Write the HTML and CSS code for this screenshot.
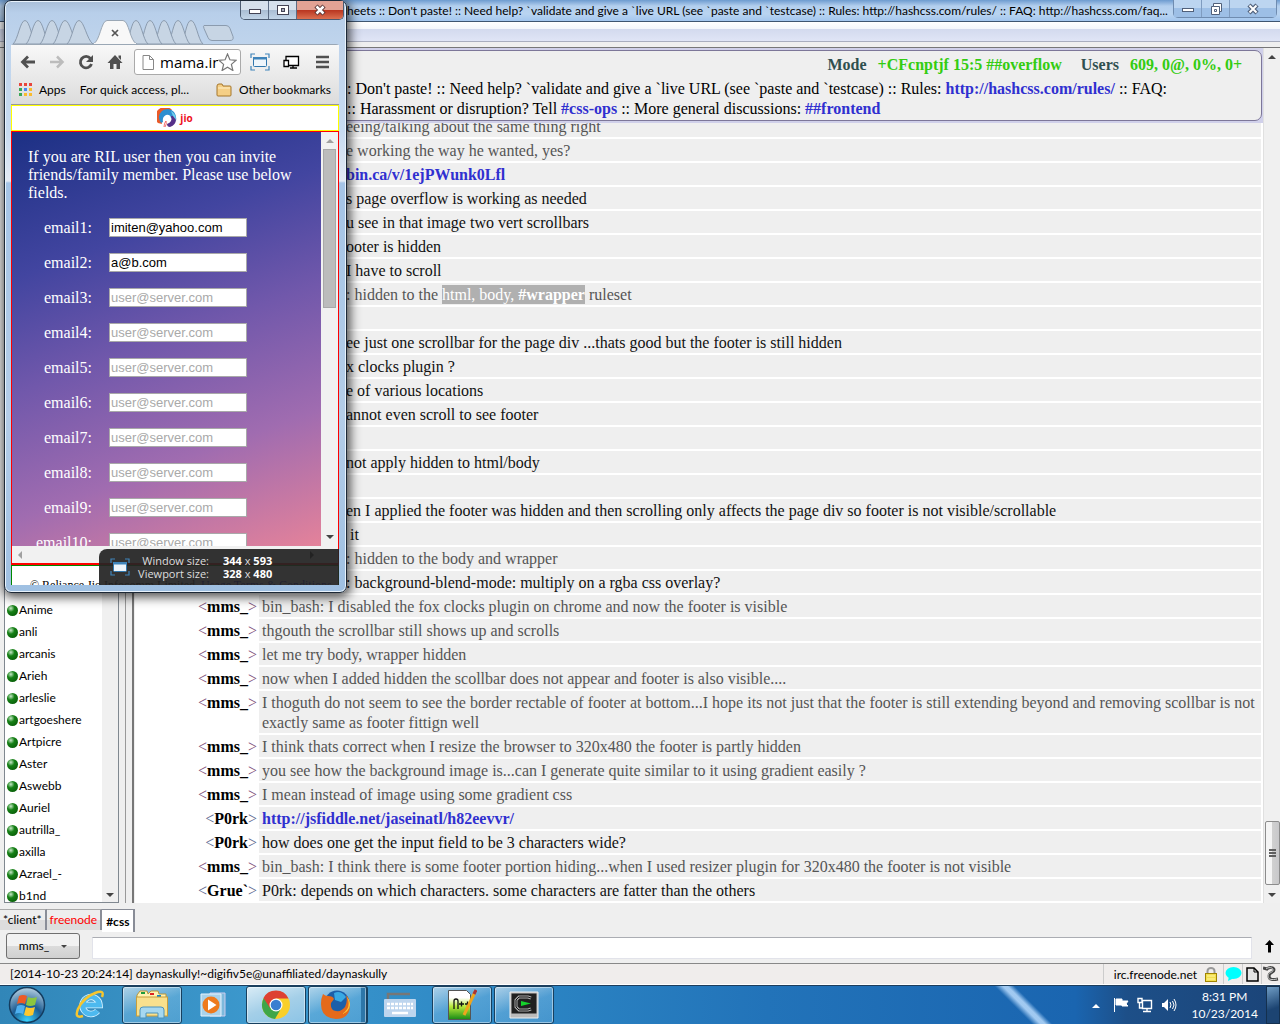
FILE: index.html
```html
<!DOCTYPE html>
<html lang="en">
<head>
<meta charset="utf-8">
<title>#css on freenode</title>
<link rel="stylesheet" href="styles.css">
</head>
<body>
<svg class="defs" width="0" height="0" aria-hidden="true">
  <defs>
    <symbol id="resize" viewBox="0 0 20 18"><path d="M1 5V1h4M15 1h4v4M19 13v4h-4M5 17H1v-4" fill="none" stroke="#3f84ba" stroke-width="1.2"/><rect x="3.500" y="4.500" width="13" height="9" rx="1" fill="#eef5fb" stroke="#2f76ad"/><path d="M3 4h14v2.500H3z" fill="#3f84ba"/></symbol>
  </defs>
</svg>

<main class="irc">
  <header class="titlebar">
    <h1 class="titlebar-text">heets :: Don't paste! :: Need help? `validate and give a `live URL (see `paste and `testcase) :: Rules: http://hashcss.com/rules/ :: FAQ: http://hashcss.com/faq...</h1>
    <div class="win-buttons">
      <button class="win-btn" aria-label="Minimize"><svg width="14" height="14"><rect x="1.500" y="6.500" width="11" height="3" fill="#fff" stroke="#50607a"/></svg></button>
      <button class="win-btn" aria-label="Restore"><svg width="14" height="14"><path d="M4.500 1.500h8v8h-2v3h-8v-8h2z" fill="#fff" stroke="#50607a"/><path d="M4.500 4.500h6v6M5.500 7.500h2v2h-2z" fill="none" stroke="#50607a"/></svg></button>
      <button class="win-btn win-btn-wide" aria-label="Close"><svg width="14" height="14"><path d="M3 3l8 8M11 3l-8 8" stroke="#50607a" stroke-width="4.500"/><path d="M3.500 3.500l7 7M10.500 3.500l-7 7" stroke="#fff" stroke-width="2"/></svg></button>
    </div>
  </header>
  <div class="menubar"></div>

  <div class="workspace">
    <aside class="users">
      <div class="user-box">
        <ul class="user-list">
          <li>Anime</li><li>anli</li><li>arcanis</li><li>Arieh</li><li>arleslie</li><li>artgoeshere</li><li>Artpicre</li><li>Aster</li><li>Aswebb</li><li>Auriel</li><li>autrilla_</li><li>axilla</li><li>Azrael_-</li><li>b1nd</li>
        </ul>
        <div class="list-scroll"><i class="arrow-down"></i></div>
      </div>
    </aside>
    <section class="channel">
      <div class="log-area">
        <div class="topic-wrap">
          <div class="topic">
            <p class="modes"><b>Mode</b><b class="val">+CFcnptjf 15:5 ##overflow</b><b class="users-label">Users</b><b class="val">609, 0@, 0%, 0+</b></p>
            <p class="topic-line">: Don't paste! :: Need help? `validate and give a `live URL (see `paste and `testcase) :: Rules: <a href="#rules">http://hashcss.com/rules/</a> :: FAQ:</p>
            <p class="topic-line">:: Harassment or disruption? Tell <a href="#ops">#css-ops</a> :: More general discussions: <a href="#frontend">##frontend</a></p>
          </div>
        </div>
        <ol class="log">
          <li class="covered own"><p>eeing/talking about the same thing right</p></li>
          <li class="covered own"><p>e working the way he wanted, yes?</p></li>
          <li class="covered"><p><a href="#paste">bin.ca/v/1ejPWunk0Lfl</a></p></li>
          <li class="covered"><p>s page overflow is working as needed</p></li>
          <li class="covered"><p>u see in that image two vert scrollbars</p></li>
          <li class="covered"><p>ooter is hidden</p></li>
          <li class="covered"><p>I have to scroll</p></li>
          <li class="covered own"><p>: hidden to the <mark>html, body, <b>#wrapper</b></mark> ruleset</p></li>
          <li class="covered"><p></p></li>
          <li class="covered"><p>ee just one scrollbar for the page div ...thats good but the footer is still hidden</p></li>
          <li class="covered"><p>x clocks plugin ?</p></li>
          <li class="covered"><p>e of various locations</p></li>
          <li class="covered"><p>annot even scroll to see footer</p></li>
          <li class="covered"><p></p></li>
          <li class="covered"><p>not apply hidden to html/body</p></li>
          <li class="covered"><p></p></li>
          <li class="covered"><p>en I applied the footer was hidden and then scrolling only affects the page div so footer is not visible/scrollable</p></li>
          <li class="covered"><p>&nbsp;it</p></li>
          <li class="covered own"><p>: hidden to the body and wrapper</p></li>
          <li class="covered"><p>: background-blend-mode: multiply on a rgba css overlay?</p></li>
          <li class="own"><span class="nick">&lt;<b>mms_</b>&gt;</span><p>bin_bash: I disabled the fox clocks plugin on chrome and now the footer is visible</p></li>
          <li class="own"><span class="nick">&lt;<b>mms_</b>&gt;</span><p>thgouth the scrollbar still shows up and scrolls</p></li>
          <li class="own"><span class="nick">&lt;<b>mms_</b>&gt;</span><p>let me try body, wrapper hidden</p></li>
          <li class="own"><span class="nick">&lt;<b>mms_</b>&gt;</span><p>now when I added hidden the scollbar does not appear and footer is also visible....</p></li>
          <li class="own"><span class="nick">&lt;<b>mms_</b>&gt;</span><p>I thoguth do not seem to see the border rectable of footer at bottom...I hope its not just that the footer is still extending beyond and removing scollbar is not exactly same as footer fittign well</p></li>
          <li class="own"><span class="nick">&lt;<b>mms_</b>&gt;</span><p>I think thats correct when I resize the browser to 320x480 the footer is partly hidden</p></li>
          <li class="own"><span class="nick">&lt;<b>mms_</b>&gt;</span><p>you see how the background image is...can I generate quite similar to it using gradient easily ?</p></li>
          <li class="own"><span class="nick">&lt;<b>mms_</b>&gt;</span><p>I mean instead of image using some gradient css</p></li>
          <li class="other"><span class="nick">&lt;<b>P0rk</b>&gt;</span><p><a href="#fiddle">http://jsfiddle.net/jaseinatl/h82eevvr/</a></p></li>
          <li class="other"><span class="nick">&lt;<b>P0rk</b>&gt;</span><p>how does one get the input field to be 3 characters wide?</p></li>
          <li class="own"><span class="nick">&lt;<b>mms_</b>&gt;</span><p>bin_bash: I think there is some footer portion hiding...when I used resizer plugin for 320x480 the footer is not visible</p></li>
          <li class="other"><span class="nick">&lt;<b>Grue`</b>&gt;</span><p>P0rk: depends on which characters. some characters are fatter than the others</p></li>
        </ol>
      </div>
      <div class="log-scroll"><i class="arrow-up"></i><div class="log-thumb"><i></i><i></i><i></i></div><i class="arrow-down"></i></div>
    </section>
  </div>

  <nav class="tabs">
    <button class="tab">*client*</button><button class="tab tab-alert">freenode</button><button class="tab tab-current">#css</button>
  </nav>
  <div class="entry">
    <button class="nick-button">mms_ <i class="arrow-down"></i></button>
    <input class="entry-input" type="text" aria-label="Message">
    <svg class="entry-up" width="9" height="13"><path d="M4.500 0L9 5H6v7.500H3V5H0z" fill="#000"/></svg>
  </div>
  <footer class="statusbar">
    <span class="status-main">[2014-10-23 20:24:14] daynaskully!~digifiv5e@unaffiliated/daynaskully</span>
    <span class="status-cell">irc.freenode.net
      <svg width="14" height="15"><path d="M3.500 7V4a3.500 3 0 0 1 7 0v3" fill="none" stroke="#999" stroke-width="2"/><rect x="1.500" y="6.500" width="11" height="8" fill="#f3df4e" stroke="#a08400"/><path d="M3 9h8M3 12h8" stroke="#fff6a0"/></svg></span>
    <span class="status-icon"><svg width="17" height="15"><ellipse cx="8.500" cy="6" rx="8" ry="6" fill="#0ff"/><path d="M4 9L3 14l6-3z" fill="#0ff"/></svg></span>
    <span class="status-icon"><svg width="13" height="15"><path d="M1 1h7l4 4v9H1z" fill="#e4e4e4" stroke="#000" stroke-width="1.500"/><path d="M8 1v4h4" fill="none" stroke="#000"/></svg></span>
    <span class="status-icon"><svg width="16" height="16"><path d="M0 2l4 1c2-2 7-2 7 1s-5 2-5 6 4 4 9 3" fill="none" stroke="#444" stroke-width="3"/><path d="M3 3c2-2 7-2 7 1s-5 2-5 6 4 4 9 3" fill="none" stroke="#ccc"/></svg></span>
  </footer>
</main>

<section class="popup" aria-label="Browser window">
  <div class="popup-top">
    <div class="popup-buttons">
      <button class="pop-btn" aria-label="Minimize"><svg width="14" height="14"><rect x="1.500" y="6.500" width="11" height="4" fill="#fff" stroke="#445"/></svg></button>
      <button class="pop-btn" aria-label="Maximize"><svg width="14" height="14"><rect x="1.500" y="2.500" width="11" height="9" fill="#fff" stroke="#445"/><rect x="5.500" y="5.500" width="3" height="3" fill="#aab" stroke="#445"/></svg></button>
      <button class="pop-btn pop-close" aria-label="Close window"><svg width="14" height="14"><path d="M3 3l8 8M11 3l-8 8" stroke="#533" stroke-width="4.500"/><path d="M3.500 3.500l7 7M10.500 3.500l-7 7" stroke="#fff" stroke-width="2.500"/></svg></button>
    </div>
  </div>
  <svg class="tabstrip" width="328" height="24" aria-hidden="true">
    <g fill="#c7d5e4" stroke="#8b9bae">
      <path d="M2 24C7 20 9 0.500 14 0.500S21 20 25 24z"/><path d="M15 24C20 20 22 0.500 27 0.500S34 20 39 24z"/><path d="M29 24C34 20 36 0.500 41 0.500S48 20 53 24z"/><path d="M42 24C47 20 49 0.500 54 0.500S62 20 67 24z"/><path d="M56 24C61 20 63 0.500 68 0.500S76 20 82 24z"/><path d="M170 24C174 20 175 0.500 180 0.500S187 20 192 24z"/><path d="M156 24C161 20 162 0.500 167 0.500S174 20 179 24z"/><path d="M142 24C147 20 148 0.500 153 0.500S160 20 165 24z"/><path d="M128 24C133 20 134 0.500 139 0.500S146 20 151 24z"/><path d="M114 24C119 20 120 0.500 125 0.500S132 20 137 24z"/>
      <path d="M193 5.500h22q3 0 4 3l3 8q1 4-3 4h-18q-3 0-4-3l-4-9q-1-3 0-3z"/>
    </g>
    <path d="M82 24C89 22 90 0.500 96 0.500h16c6 0 7 21.500 14 23.500z" fill="#f8f8f8" stroke="#9aa7b5"/>
    <path d="M83 23h42v1H83z" fill="#f8f8f8"/>
    <path d="M101 10l6 6M107 10l-6 6" stroke="#555" stroke-width="1.700"/>
  </svg>
  <div class="browser">
    <div class="toolbar">
      <button class="tool" aria-label="Back"><svg width="16" height="16"><path d="M15 8H3M8 2.500L2.500 8 8 13.500" fill="none" stroke="#505050" stroke-width="2.800"/></svg></button>
      <button class="tool" aria-label="Forward"><svg width="16" height="16"><path d="M1 8h12M8 2.500l5.500 5.500L8 13.500" fill="none" stroke="#bcbcbc" stroke-width="2.500"/></svg></button>
      <button class="tool" aria-label="Reload"><svg width="16" height="16"><path d="M12.500 4.500A5.700 5.700 0 1 0 13.500 10" fill="none" stroke="#505050" stroke-width="2.800"/><path d="M15 1v7H8z" fill="#505050"/></svg></button>
      <button class="tool" aria-label="Home"><svg width="16" height="16"><path d="M8 1l7.500 8H13v6H9.500v-5h-3v5H3V9H0.500zM11.500 1.500H14V6l-2.500-2.500z" fill="#505050"/></svg></button>
      <div class="address">
        <svg width="12" height="15"><path d="M1 0.500h6.500l4 4v10H1z" fill="#fff" stroke="#888"/><path d="M7.500 0.500v4h4" fill="none" stroke="#888"/></svg>
        <input class="url" type="text" value="mama.indo" aria-label="Address">
        <svg width="19" height="18"><path d="M9.500 1l2.400 5.800 6.200.5-4.700 4.100 1.500 6.100-5.400-3.300-5.400 3.300 1.500-6.100L.9 7.300l6.200-.5z" fill="#fff" stroke="#777" stroke-width="1.200"/></svg>
      </div>
      <button class="tool ext" aria-label="Window resizer"><svg width="20" height="18"><use href="#resize"/></svg></button>
      <button class="tool ext" aria-label="Devices"><svg width="17" height="14"><path d="M3 5V1.500h12.500v9H6M10 11v2M7 13h7" fill="#fff" stroke="#000" stroke-width="1.300"/><path d="M1 5.500h4.500v6H1z" fill="#fff" stroke="#000" stroke-width="1.300"/></svg></button>
      <button class="tool menu" aria-label="Menu"><svg width="13" height="14"><path d="M0 2h13M0 7h13M0 12h13" stroke="#505050" stroke-width="2.600"/></svg></button>
    </div>
    <div class="bookmarks">
      <svg width="13" height="13"><path d="M0 0h3v3H0zM5 0h3v3H5zM10 0h3v3h-3z" fill="#e8453c"/><path d="M0 5h3v3H0z" fill="#3aa757"/><path d="M5 5h3v3H5z" fill="#4688f1"/><path d="M10 5h3v3h-3zM5 10h3v3H5zM10 10h3v3h-3z" fill="#f9bb2d"/><path d="M0 10h3v3H0z" fill="#3aa757"/></svg>
      <span>Apps</span><span class="hint">For quick access, pl...</span>
      <svg class="folder" width="16" height="14"><path d="M1 3q0-2 2-2h3l1 2h7q1 0 1 1v8q0 1-1 1H2q-1 0-1-1z" fill="#f5cf86" stroke="#a5762b"/><path d="M2 5h12" stroke="#fff0c8"/></svg>
      <span>Other bookmarks</span>
    </div>
    <div class="page">
      <header class="brand">
        <svg width="20" height="20"><path d="M1 15A9.500 9.500 0 0 1 15 2q-5 0-8 5T5 16z" fill="#ea5a28"/><path d="M4 15A8 8 0 0 1 17 4q3 4 2 9l-5-3q-1-4-5-3-4 2-3 7z" fill="#2e8fd0"/><path d="M14 8q2 6-4 8 0 3 3 3 6-2 6-8l-2-3z" fill="#56308a"/><path d="M14 3q5 3 5 9l-3-4z" fill="#6fd0ee"/><path d="M7 19q0-4 2-6 1 3-1 6" fill="#fff" stroke="#e33" stroke-width=".7"/></svg>
        <strong>jio</strong>
      </header>
      <div class="wrapper">
        <div class="scroller">
          <form class="invite">
            <p>If you are RIL user then you can invite friends/family member. Please use below fields.</p>
            <div class="field"><label for="e1">email1:</label><input id="e1" type="text" value="imiten@yahoo.com"></div>
            <div class="field"><label for="e2">email2:</label><input id="e2" type="text" value="a@b.com"></div>
            <div class="field"><label for="e3">email3:</label><input id="e3" type="text" placeholder="user@server.com"></div>
            <div class="field"><label for="e4">email4:</label><input id="e4" type="text" placeholder="user@server.com"></div>
            <div class="field"><label for="e5">email5:</label><input id="e5" type="text" placeholder="user@server.com"></div>
            <div class="field"><label for="e6">email6:</label><input id="e6" type="text" placeholder="user@server.com"></div>
            <div class="field"><label for="e7">email7:</label><input id="e7" type="text" placeholder="user@server.com"></div>
            <div class="field"><label for="e8">email8:</label><input id="e8" type="text" placeholder="user@server.com"></div>
            <div class="field"><label for="e9">email9:</label><input id="e9" type="text" placeholder="user@server.com"></div>
            <div class="field"><label for="e10">email10:</label><input id="e10" type="text" placeholder="user@server.com"></div>
          </form>
          <div class="v-scroll"><i class="arrow-up"></i><div class="v-thumb"></div><i class="arrow-down"></i></div>
        </div>
        <div class="h-scroll"><i class="arrow-left"></i><i class="arrow-right"></i></div>
      </div>
      <footer class="legal">© Reliance Jio Infocomm Limited. <a href="#terms">Usage Terms &amp; Conditions</a></footer>
      <div class="size-tip">
        <svg width="20" height="18"><use href="#resize"/></svg>
        <dl><dt>Window size:</dt><dd><b>344</b> x <b>593</b></dd><dt>Viewport size:</dt><dd><b>328</b> x <b>480</b></dd></dl>
      </div>
    </div>
  </div>
</section>

<nav class="taskbar" aria-label="Taskbar">
  <button class="start" aria-label="Start"><svg width="38" height="38" viewBox="0 0 38 38"><defs><radialGradient id="orb" cx=".5" cy=".95" r=".9"><stop offset="0" stop-color="#38d4ff"/><stop offset=".5" stop-color="#1c5c93"/><stop offset="1" stop-color="#a9c6da"/></radialGradient></defs><circle cx="19" cy="19" r="17.500" fill="url(#orb)" stroke="#143d60" stroke-width="1.500"/><path d="M11 10q4-2 8 0l-2 8q-4-2-8 0z" fill="#ee5a24"/><path d="M20 11q4 2 9 0l-2 8q-5 2-9 0z" fill="#8cc63f"/><path d="M9 20q4-2 8 0l-2 8q-4-2-8 0z" fill="#4fb0f0"/><path d="M18 21q4 2 9 0l-2 8q-5 2-9 0z" fill="#fdc82f"/></svg></button>
  <div class="apps">
    <button class="app" aria-label="Internet Explorer"><svg width="34" height="34" viewBox="0 0 34 34"><path d="M10 17h16.500a8.500 8.500 0 1 0-2 6" fill="none" stroke="#d8f2ff" stroke-width="6.500"/><path d="M10 17h16.500a8.500 8.500 0 1 0-2 6" fill="none" stroke="#4db9ef" stroke-width="4.800"/><path d="M29 9q3-8-7-4Q10 10 5 21q-4 10 5 7" fill="none" stroke="#f6c62e" stroke-width="2.500"/></svg></button>
    <button class="app open" aria-label="Explorer"><svg width="34" height="32" viewBox="0 0 34 32"><path d="M2 6l3-4h7l1 3 3-3h7l1 3h7v4H2z" fill="#fff2b0" stroke="#b9953b"/><path d="M6 3h4v2H6z" fill="#1c9b3d"/><path d="M15 4h4v2h-4z" fill="#d22"/><path d="M22 6h4v2h-4z" fill="#18c"/><rect x="1.500" y="8" width="31" height="19" fill="#f8e08d" stroke="#c69e3d"/><path d="M5 29v-8q0-3 3-3h18q3 0 3 3v8h-6v-5H11v5z" fill="#a6d8f0" stroke="#4b93bd"/></svg></button>
    <button class="app" aria-label="Media Player"><svg width="28" height="26" viewBox="0 0 28 26"><path d="M10 1h15v23H10z" fill="#7eb9dc" stroke="#cce"/><path d="M1 2h20v22H1z" fill="#a9d2ea" stroke="#e4f3fc"/><circle cx="11" cy="13" r="8.500" fill="#ee7a1c"/><path d="M8 7.500l8.500 5.500L8 18.500z" fill="#fff"/></svg></button>
    <button class="app open lit" aria-label="Chrome"><svg width="30" height="30" viewBox="0 0 30 30"><circle cx="15" cy="15" r="14" fill="#f9cf29"/><path d="M2.800 8A14 14 0 0 0 14 29l6-10.500L15 15z" fill="#3fa648"/><path d="M2.500 8L9 18l6-9.500h12.500A14 14 0 0 0 2.500 8z" fill="#dd4032"/><circle cx="15" cy="15" r="6.500" fill="#fff"/><circle cx="15" cy="15" r="5.300" fill="#3b7ed0"/></svg></button>
    <button class="app open stack" aria-label="Firefox"><svg width="30" height="30" viewBox="0 0 30 30"><circle cx="16" cy="13" r="12.500" fill="#1c5fa9"/><path d="M13 3q7-3 12 4l-5 5-6-2z" fill="#38a9e4"/><path d="M2 4q2 2 5 2 5 0 6 3l-3 4q-1 7 5 8 5 1 9-4 3-6 1-12 4 4 4 10 0 14-14 14Q0 28 0 14q0-6 2-10z" fill="#e46a1b"/><path d="M26 7q5 11-5 17 7-2 8-9 0-5-3-8z" fill="#f8c936"/></svg></button>
    <button class="app" aria-label="Keyboard"><svg width="32" height="26" viewBox="0 0 32 26"><path d="M4 7V2h22" fill="none" stroke="#777" stroke-width="2.500"/><rect y="7" width="32" height="18" rx="1" fill="#bdd5ee"/><path d="M3 12h26M3 16h26" stroke="#fff" stroke-width="2.500" stroke-dasharray="3 1"/><path d="M8 21h16" stroke="#fff" stroke-width="2.500"/></svg></button>
    <button class="app open" aria-label="Notepad++"><svg width="30" height="32" viewBox="0 0 30 32"><defs><linearGradient id="page" x2="0" y2="1"><stop offset=".25" stop-color="#fff"/><stop offset=".55" stop-color="#b6e839"/><stop offset="1" stop-color="#168a16"/></linearGradient></defs><path d="M1.500 1.500h18l4 4v25h-22z" fill="url(#page)" stroke="#555"/><path d="M7 20V12q0-2 2-2t2 2v8M12 15h5M14.500 12.500v5M18 15h5M20.500 12.500v5" fill="none" stroke="#111" stroke-width="1.300"/><path d="M17 26L28 3" stroke="#efa51d" stroke-width="3"/><path d="M27 5l2-4" stroke="#a33" stroke-width="3"/></svg></button>
    <button class="app open" aria-label="Terminal"><svg width="30" height="28" viewBox="0 0 30 28"><path d="M1 1h28v26H1z" fill="#bbb" stroke="#eee"/><path d="M2.500 2.500h25v20h-25z" fill="#202020"/><path d="M22 7l-3-1h-9L7 9v7l3 3h9l3-1" fill="none" stroke="#aaa" stroke-width="3"/><path d="M22 7l-3-1h-9L7 9v7l3 3h9l3-1" fill="none" stroke="#111"/><path d="M12 10l10 2.500L12 15z" fill="#15d32b"/></svg></button>
  </div>
  <div class="tray">
    <svg width="8" height="5"><path d="M0 5l4-4 4 4z" fill="#fff"/></svg>
    <svg width="16" height="16"><path d="M1.500 1v14M3 2h6v6H3zM9 4h6l-2 3 2 2H9z" fill="#fff" stroke="#fff"/></svg>
    <svg width="16" height="16"><path d="M5.500 3.500h9v8h-9zM10 12v2M6 14.500h8M2.500 5v6h3M1 1.500h4v4H1z" fill="none" stroke="#fff" stroke-width="1.400"/></svg>
    <svg width="16" height="14"><path d="M1 5h2l4-4v12L3 9H1z" fill="#fff"/><path d="M9 4q2 3 0 6M11.500 3q3 4 0 8M13 1q4 6 0 12" fill="none" stroke="#fff"/></svg>
    <div class="clock"><span>8:31 PM</span><span>10/23/2014</span></div>
    <button class="show-desktop" aria-label="Show desktop"></button>
  </div>
</nav>
</body>
</html>
```
FILE: styles.css
```css
* { box-sizing: border-box; }
html, body { height: 100%; }
body {
  margin: 0;
  display: flex;
  flex-direction: column;
  overflow: hidden;
  position: relative;
  background: #efefef;
  color: #000;
  font: 12px/16px Lato, "Open Sans", sans-serif;
}
button { margin: 0; padding: 0; border: 0; background: none; font: inherit; color: inherit; }
input { margin: 0; }
p, ol, ul, dl, dd, h1 { margin: 0; padding: 0; }
ol, ul { list-style: none; }
a { color: #3030d0; font-weight: bold; text-decoration: none; }
svg { display: block; flex: none; }
.defs { position: absolute; }

.arrow-up, .arrow-down, .arrow-left, .arrow-right { flex: none; width: 0; height: 0; border: 4px solid transparent; }
.arrow-up { border-top: 0; border-bottom-color: #444; }
.arrow-down { border-bottom: 0; border-top-color: #444; }
.arrow-left { border-left: 0; border-right-color: #a0a0a0; }
.arrow-right { border-right: 0; border-left-color: #111; }

/* Chat client */
.irc { flex: 1; min-height: 0; display: flex; flex-direction: column; }
.titlebar {
  flex: none;
  height: 22px;
  display: flex;
  justify-content: space-between;
  padding-left: 347px;
  background: linear-gradient(#6d9bcf, #b3cfee 6px, #b9d4f1 14px, #a3c6ee);
  border-bottom: 1px solid #3f5570;
}
.titlebar-text { flex: 1; min-width: 0; overflow: hidden; font-size: 12px; line-height: 22px; font-weight: normal; white-space: nowrap; }
.win-buttons { flex: none; display: flex; height: 18px; margin-right: 3px; border: 1px solid #6f8cb0; border-top: 0; border-radius: 0 0 5px 5px; }
.win-btn { width: 28px; display: flex; align-items: center; justify-content: center; background: linear-gradient(#bcd5f0 50%, #9dbfe6 50%); border-right: 1px solid #7f9cc0; }
.win-btn-wide { width: 46px; border: 0; }
.menubar {
  flex: none;
  height: 26px;
  background: linear-gradient(#fff, #f4f6fb 7px, #d3daee 7px, #e0e5f6 19px, #a9aebf 19px, #a9aebf 20px, #efefef 20px);
  border-bottom: 1px solid #777;
}
.workspace { flex: 1; min-height: 0; display: flex; }
.users { flex: none; width: 134px; display: flex; padding: 0 13px 0 4px; border-right: 2px solid #777; margin-right: 1px; background: linear-gradient(90deg, #efefef 125px, #999 125px, #999 126px, #efefef 126px); }
.user-box { flex: 1; display: flex; align-items: stretch; overflow: hidden; background: #fff; border: 1px solid #808890; }
.user-list { flex: 1; align-self: flex-end; margin-bottom: -5px; }
.user-list li { display: flex; align-items: center; gap: 1px; height: 22px; padding-left: 2px; }
.user-list li::before { content: ""; width: 11px; height: 11px; border-radius: 50%; background: radial-gradient(circle at 35% 30%, #c8e8c8, #158015 35%, #045004); }
.list-scroll { width: 16px; display: flex; align-items: flex-end; justify-content: center; padding-bottom: 5px; background: #f0f0f0; }
.channel { flex: 1; min-width: 0; display: flex; }
.log-area { flex: 1; min-width: 0; display: flex; flex-direction: column; background: #fff; font: 16px/20px "Liberation Serif", serif; }
.topic-wrap { flex: none; padding: 2px 1px 2px; background: #d0d0ea; }
.topic { height: 71px; padding: 4px 19px 2px 210px; border: 1px solid #7d7799; border-radius: 7px; background: #efefef; }
.modes { display: flex; justify-content: flex-end; gap: 11px; color: #2f4f4f; margin-bottom: 4px; }
.modes .val { color: #33cc11; }
.users-label { margin-left: 8px; }
.topic-line { white-space: nowrap; }
.log { flex: 1; min-height: 0; overflow: hidden; display: flex; flex-direction: column; justify-content: flex-end; padding-right: 2px; }
.log li { flex: none; display: grid; grid-template-columns: 122px 1fr; column-gap: 2px; margin-bottom: 2px; }
.log p { grid-column: 2; min-height: 22px; padding: 2px 3px 0; background: #efefef; color: #111; }
.log .own p { color: #555; }
.log .covered p { padding-left: 87px; }
.log mark { display: inline-block; line-height: 19px; background: #b0b0b0; color: #fff; }
.nick { padding-top: 2px; text-align: right; color: #5c6890; }
.nick b { color: #000; }
.own .nick { color: #80507c; }
.log-scroll { flex: none; width: 17px; display: flex; flex-direction: column; align-items: center; padding: 7px 0 6px; background: #f0f0f0; border-left: 1px solid #e0e0e0; }
.log-thumb { width: 15px; height: 64px; margin: auto 0 8px; display: flex; flex-direction: column; align-items: center; justify-content: center; gap: 1px; border: 1px solid #8c8c8c; border-radius: 2px; background: linear-gradient(90deg, #f5f5f5 45%, #d0d0d0 50%, #c8c8ca); }
.log-thumb i { width: 7px; height: 2px; background: #606060; }

.tabs { flex: none; height: 29px; display: flex; align-items: flex-start; padding-top: 6px; }
.tab { height: 21px; padding: 0 3px; border-top: 1px solid #aaa; border-right: 2px solid #8a8e98; background: linear-gradient(#eee 50%, #ddd 50%); }
.tab-alert { color: #f00; }
.tab-current { height: 23px; padding: 2px 4px 0; background: #fff; border-color: #888c96; font-weight: bold; }
.entry { flex: none; height: 31px; display: flex; align-items: flex-start; padding: 1px 6px 0; }
.nick-button { width: 74px; height: 26px; display: flex; align-items: center; justify-content: center; gap: 12px; border: 1px solid #707070; border-radius: 3px; background: linear-gradient(#f2f2f2 50%, #dcdcdc 50%, #d0d0d0); }
.nick-button .arrow-down { border-width: 3px 3px 0; }
.entry-input { flex: 1; height: 22px; margin: 4px 0 0 12px; border: 1px solid #e2e3ea; border-top-color: #abadb3; background: #fff; }
.entry-up { margin: 7px 0 0 13px; }
.statusbar { flex: none; height: 22px; display: flex; align-items: stretch; border-top: 1px solid #888; border-bottom: 1px solid #fff; background: #f0edec; line-height: 19px; }
.status-main { flex: 1; padding-left: 10px; }
.status-cell { display: flex; align-items: center; gap: 7px; padding: 0 5px 0 10px; border-left: 1px solid #ccc; }
.status-icon { width: 19px; display: flex; align-items: center; justify-content: center; border-left: 1px solid #ccc; }

/* Floating browser */
.popup {
  position: absolute;
  left: 4px;
  top: 0;
  width: 343px;
  height: 593px;
  display: flex;
  flex-direction: column;
  padding: 0 7px 7px 6px;
  border: 1px solid #1c2836;
  border-radius: 7px;
  background: linear-gradient(#a9bfd8, #b8cfea 12px, #bfd4ec 44px, #c7dbf1 130px, #e3eaf4 180px, #a5c4e6 182px, #b4cde8 70%, #9fc0e2);
  box-shadow: inset 0 0 0 1px #e8f2fb, 1px 2px 11px 2px rgba(0, 0, 0, .7);
}
.popup-top { flex: none; height: 19px; display: flex; justify-content: flex-end; }
.popup-buttons { display: flex; height: 19px; margin-right: -5px; border: 1px solid #4a5a70; border-top: 0; border-radius: 0 0 5px 5px; overflow: hidden; }
.pop-btn { width: 28px; display: flex; align-items: center; justify-content: center; border-right: 1px solid #5c6c84; background: linear-gradient(#d5e0ec 50%, #a9bdd3 50%, #c2d5e8); }
.pop-close { width: 46px; border: 0; background: linear-gradient(#e2a294 50%, #b8341f 50%, #dc7050); }
.tabstrip { width: 100%; }
.browser { flex: 1; min-height: 0; display: flex; flex-direction: column; background: #ececec; border-top: 1px solid #9aa7b5; border-radius: 3px 3px 0 0; }
.toolbar { flex: none; height: 34px; display: flex; align-items: center; gap: 13px; padding: 0 10px 0 9px; background: linear-gradient(#f8f8f8, #e8e8e8); }
.tool { flex: none; }
.address { flex: 1; min-width: 0; height: 26px; display: flex; align-items: center; padding: 0 3px 0 7px; margin: 0 -4px 0 -2px; border: 1px solid #aaa; border-radius: 3px; background: #fff; }
.url { flex: 1; min-width: 0; padding: 0; margin-left: 6px; border: 0; outline: 0; font: 15px/20px "Open Sans", sans-serif; }
.menu { margin-left: 3px; }
.bookmarks { flex: none; height: 26px; display: flex; align-items: center; padding: 0 8px 4px; gap: 7px; background: linear-gradient(#e8e8e8, #dcdcdc); border-bottom: 1px solid #999; white-space: nowrap; }
.hint { margin-left: 7px; }
.folder { margin-left: auto; }
.page { flex: 1; min-height: 0; position: relative; display: flex; flex-direction: column; overflow: hidden; background: #fff; font: 16px/18px "Liberation Serif", serif; }
.brand { flex: none; height: 26px; display: flex; align-items: center; justify-content: center; gap: 3px; border: 1px solid #ff0; }
.brand strong { color: #ee1020; font: bold 10px/12px "Open Sans", sans-serif; }
.wrapper { flex: 1; min-height: 0; display: flex; flex-direction: column; border: 1px solid #f00; border-bottom-width: 2px; }
.scroller { flex: 1; min-height: 0; display: flex; }
.invite { flex: 1; min-width: 0; overflow: hidden; padding: 16px 16px 0; color: #fff; background: linear-gradient(160deg, #1c3084, #4245a0 28%, #7158ab 50%, #a06cb0 74%, #e4829a); }
.invite p { margin-bottom: 16px; }
.field { display: grid; grid-template-columns: 64px 138px; column-gap: 17px; align-items: center; height: 19px; margin-bottom: 16px; }
.field label { text-align: right; }
.field input { width: 100%; height: 19px; padding: 1px; border: 1px solid #a9a9a9; background: #fff; color: #000; font: 13px/15px "Liberation Sans", sans-serif; }
.field input::placeholder { color: #a9a9a9; opacity: 1; }
.v-scroll { flex: none; width: 17px; display: flex; flex-direction: column; align-items: center; padding: 7px 0; background: #f1f1f1; }
.v-scroll .arrow-up { border-bottom-color: #a0a0a0; }
.v-thumb { width: 13px; height: 159px; margin: 6px 0 auto; background: #bcbcbc; border: 1px solid #a8a8a8; }
.h-scroll { flex: none; height: 17px; display: flex; align-items: center; justify-content: space-between; padding: 0 24px 0 6px; background: #f1f1f1; }
.legal { flex: none; height: 20px; padding: 10px 0 0 18px; overflow: hidden; border: 1px solid #080; border-bottom: 0; font-size: 12px; white-space: nowrap; }
.legal a { color: #00c; font-weight: normal; text-decoration: underline; }
.size-tip { position: absolute; right: 0; bottom: 0; width: 240px; height: 36px; display: flex; align-items: center; gap: 9px; padding-left: 11px; border-radius: 8px 0 0; background: rgba(35, 35, 35, .93); color: #ddd; font: 11px/13px "Open Sans", sans-serif; }
.size-tip dl { display: grid; grid-template-columns: 70px auto; column-gap: 14px; white-space: nowrap; }
.size-tip dt { text-align: right; justify-self: end; }
.size-tip b { color: #fff; }

/* Taskbar */
.taskbar {
  flex: none;
  height: 39px;
  display: flex;
  align-items: stretch;
  border-top: 1px solid #1d3d5c;
  background:
    linear-gradient(45deg, transparent 41%, rgba(175, 212, 248, .9) 48%, rgba(175, 212, 248, .9) 52%, transparent 58%) 984px 0 / 80px 100% no-repeat,
    linear-gradient(90deg, #3186b8, #3c98cd 20%, #2c86c4 40%, #2273b9 60%, #1a65b0 84%, #1d4f88 88%, #1b4478);
}
.start { flex: none; width: 54px; display: flex; align-items: center; justify-content: center; }
.apps { flex: 1; display: flex; gap: 2px; padding-left: 6px; }
.app { width: 60px; display: flex; align-items: center; justify-content: center; }
.open { border: 1px solid #17405f; border-radius: 3px; background: linear-gradient(160deg, rgba(255, 255, 255, .6), rgba(150, 205, 240, .35) 50%, rgba(130, 190, 230, .3)); box-shadow: inset 0 0 0 1px rgba(255, 255, 255, .45); }
.lit { background: linear-gradient(160deg, #d9ecf6, #a4cfe8 50%, #8cc4e6); }
.stack { border-right-width: 2px; padding-right: 4px; box-shadow: inset 0 0 0 1px rgba(255, 255, 255, .45), inset -5px 0 0 #2d76a8; }
.tray { flex: none; display: flex; align-items: center; gap: 8px; color: #fff; }
.tray svg:first-child { margin-right: 5px; }
.clock { display: flex; flex-direction: column; align-items: center; line-height: 17px; margin: 0 0 0 6px; }
.show-desktop { align-self: stretch; width: 14px; border: 1px solid #14304e; background: linear-gradient(160deg, #6f9cc4, #1c4472 60%); }
```
